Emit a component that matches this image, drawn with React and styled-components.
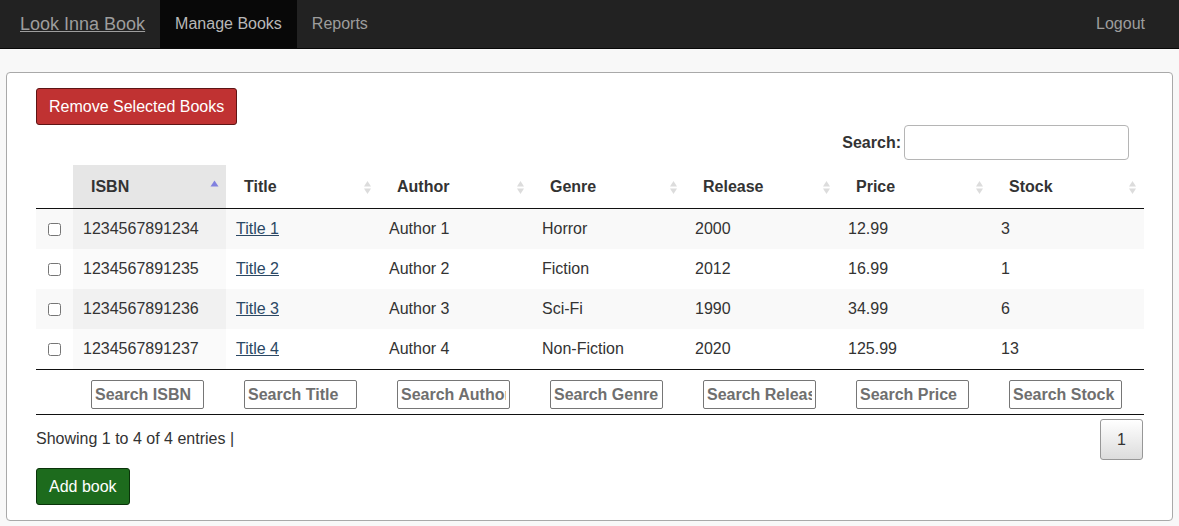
import React from 'react'
import styled, { createGlobalStyle } from 'styled-components'

const GlobalStyle = createGlobalStyle`
    html, body {
        margin: 0;
        padding: 0;
        background: #f8f8f8;
        font-family: "Liberation Sans", Arial, sans-serif;
        font-size: 16px;
        color: #333;
    }
    * {
        box-sizing: border-box;
    }
`

const books = [
    { isbn: '1234567891234', title: 'Title 1', author: 'Author 1', genre: 'Horror', release: '2000', price: '12.99', stock: '3' },
    { isbn: '1234567891235', title: 'Title 2', author: 'Author 2', genre: 'Fiction', release: '2012', price: '16.99', stock: '1' },
    { isbn: '1234567891236', title: 'Title 3', author: 'Author 3', genre: 'Sci-Fi', release: '1990', price: '34.99', stock: '6' },
    { isbn: '1234567891237', title: 'Title 4', author: 'Author 4', genre: 'Non-Fiction', release: '2020', price: '125.99', stock: '13' },
]

const columns = ['ISBN', 'Title', 'Author', 'Genre', 'Release', 'Price', 'Stock']

const SortIcon = ({ active }) => (
    <svg width="9" height="19" viewBox="0 0 9 19">
        {active ? (
            <path d="M4.5 2.5 L8.5 8.5 L0.5 8.5 Z" fill="#8181df" />
        ) : (
            <>
                <path d="M4.5 3 L8 8.5 L1 8.5 Z" fill="#dcdcdc" />
                <path d="M4.5 16 L8 10.5 L1 10.5 Z" fill="#dcdcdc" />
            </>
        )}
    </svg>
)

const App = () => {
    return (
        <>
            <GlobalStyle />
            <Navbar>
                <Brand href="#">Look Inna Book</Brand>
                <NavLink $active>Manage Books</NavLink>
                <NavLink>Reports</NavLink>
                <NavRight>
                    <NavLink>Logout</NavLink>
                </NavRight>
            </Navbar>
            <Card>
                <Button $variant="danger">Remove Selected Books</Button>
                <FilterRow>
                    <label>Search:</label>
                    <SearchInput type="text" />
                </FilterRow>
                <Table>
                    <colgroup>
                        <col style={{ width: 37 }} />
                        {columns.map((c) => (
                            <col key={c} style={{ width: 153 }} />
                        ))}
                    </colgroup>
                    <thead>
                        <tr>
                            <HeadCell />
                            {columns.map((c, i) => (
                                <HeadCell key={c} $sorted={i === 0}>
                                    <HeadInner>
                                        <span>{c}</span>
                                        <SortIcon active={i === 0} />
                                    </HeadInner>
                                </HeadCell>
                            ))}
                        </tr>
                    </thead>
                    <tbody>
                        {books.map((b, r) => (
                            <Row key={b.isbn} $odd={r % 2 === 0}>
                                <CheckCell>
                                    <input type="checkbox" />
                                </CheckCell>
                                <Cell>{b.isbn}</Cell>
                                <Cell>
                                    <TitleLink href="#">{b.title}</TitleLink>
                                </Cell>
                                <Cell>{b.author}</Cell>
                                <Cell>{b.genre}</Cell>
                                <Cell>{b.release}</Cell>
                                <Cell>{b.price}</Cell>
                                <Cell>{b.stock}</Cell>
                            </Row>
                        ))}
                    </tbody>
                    <tfoot>
                        <tr>
                            <FootCell />
                            {columns.map((c) => (
                                <FootCell key={c}>
                                    <ColumnSearch type="text" placeholder={`Search ${c}`} />
                                </FootCell>
                            ))}
                        </tr>
                    </tfoot>
                </Table>
                <InfoRow>
                    <Info>Showing 1 to 4 of 4 entries |</Info>
                    <PageButton>1</PageButton>
                </InfoRow>
                <Button $variant="success">Add book</Button>
            </Card>
        </>
    )
}

const Navbar = styled.nav`
    display: flex;
    align-items: stretch;
    height: 49px;
    background: #222;
    border-bottom: 1px solid #080808;
`

const Brand = styled.a`
    display: flex;
    align-items: center;
    padding: 0 15px 0 20px;
    font-size: 18px;
    color: #9d9d9d;
    text-decoration: underline;
`

const NavLink = styled.a`
    display: flex;
    align-items: center;
    padding: 0 15px;
    font-size: 16px;
    color: ${(p) => (p.$active ? '#b8b8b8' : '#9d9d9d')};
    background: ${(p) => (p.$active ? '#080808' : 'transparent')};
    cursor: pointer;
`

const NavRight = styled.div`
    display: flex;
    margin-left: auto;
    padding-right: 19px;
`

const Card = styled.div`
    margin: 23px 6px 6px;
    padding: 15px 29px 15px;
    background: #fff;
    border: 1px solid #a9a9a9;
    border-radius: 4px;
`

const Button = styled.button`
    display: block;
    padding: 6px 12px;
    font-family: "Liberation Sans", Arial, sans-serif;
    font-size: 16px;
    line-height: 23px;
    color: #fff;
    border-radius: 3px;
    cursor: pointer;
    background: ${(p) => (p.$variant === 'danger' ? '#c03232' : '#1d6b1d')};
    border: 1px solid ${(p) => (p.$variant === 'danger' ? '#5e1515' : '#0a330a')};
`

const FilterRow = styled.div`
    display: flex;
    justify-content: flex-end;
    align-items: center;
    gap: 3px;
    margin-right: 14px;
    margin-bottom: 5px;
    label {
        font-weight: bold;
    }
`

const SearchInput = styled.input`
    width: 225px;
    height: 35px;
    border: 1px solid #b5b5b5;
    border-radius: 4px;
    padding: 4px 8px;
    font-size: 16px;
`

const Table = styled.table`
    width: 1108px;
    table-layout: fixed;
    border-collapse: collapse;
    border-bottom: 1px solid #111;
`

const HeadCell = styled.th`
    padding: 12px 7px 11px 18px;
    text-align: left;
    font-weight: bold;
    line-height: 20px;
    border-bottom: 1px solid #111;
    background: ${(p) => (p.$sorted ? '#e6e6e6' : 'transparent')};
`

const HeadInner = styled.div`
    display: flex;
    justify-content: space-between;
    align-items: center;
`

const Row = styled.tr`
    background: ${(p) => (p.$odd ? '#f9f9f9' : '#fff')};
    & + & td {
        border-top: 1px solid #ddd;
    }
    td:nth-child(2) {
        background: ${(p) => (p.$odd ? '#f1f1f1' : '#fafafa')};
    }
`

const Cell = styled.td`
    padding: 8px 10px;
    line-height: 24px;
    white-space: nowrap;
`

const CheckCell = styled.td`
    padding: 8px 0;
    line-height: 24px;
    text-align: center;
    input {
        margin: 0;
        width: 13px;
        height: 13px;
        vertical-align: middle;
    }
`

const TitleLink = styled.a`
    color: #2b4864;
    text-decoration: underline;
`

const FootCell = styled.th`
    padding: 10px 18px 5px;
    text-align: left;
    border-top: 1px solid #111;
`

const ColumnSearch = styled.input`
    display: block;
    width: 113px;
    height: 29px;
    padding: 2px 3px;
    border: 1px solid #767676;
    border-radius: 2px;
    font-family: "Liberation Sans", Arial, sans-serif;
    font-size: 16px;
    font-weight: bold;
    &::placeholder {
        color: #6f6f6f;
    }
`

const InfoRow = styled.div`
    display: flex;
    justify-content: space-between;
    align-items: flex-start;
    margin-bottom: 8px;
`

const Info = styled.div`
    padding-top: 12px;
    line-height: 23px;
`

const PageButton = styled.button`
    margin-top: 4px;
    padding: 8px 16px;
    font-family: "Liberation Sans", Arial, sans-serif;
    font-size: 16px;
    line-height: 23px;
    color: #333;
    border: 1px solid #979797;
    border-radius: 3px;
    background: linear-gradient(to bottom, #fff 0%, #dcdcdc 100%);
    cursor: pointer;
`

export default App
